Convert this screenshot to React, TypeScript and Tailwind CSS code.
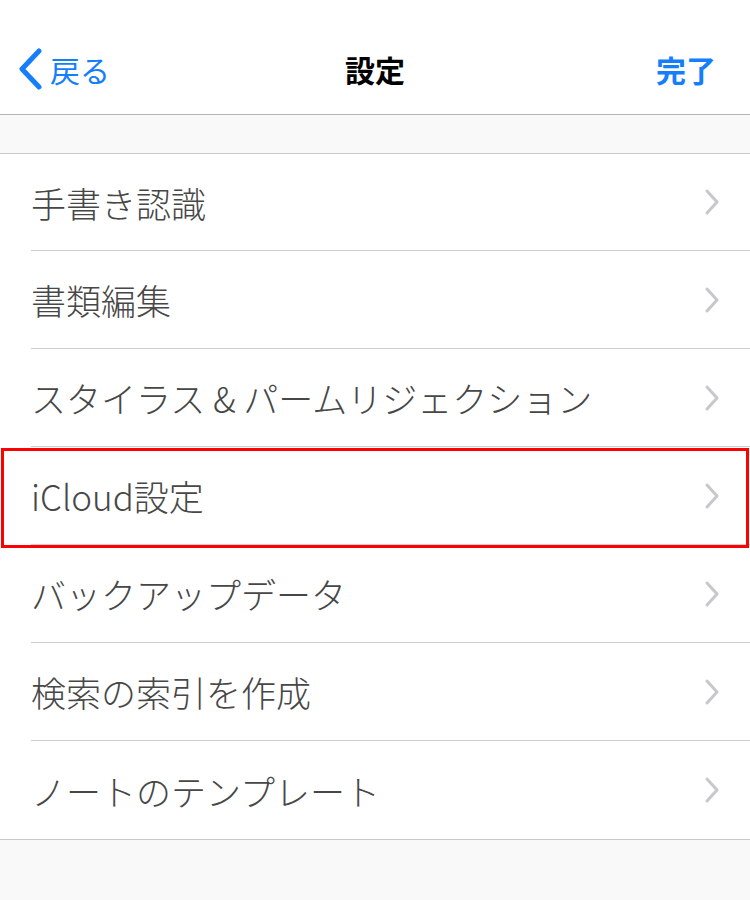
const items = [
  "手書き認識",
  "書類編集",
  "スタイラス & パームリジェクション",
  "iCloud設定",
  "バックアップデータ",
  "検索の索引を作成",
  "ノートのテンプレート",
];

function Chevron() {
  return (
    <svg width="16" height="28" viewBox="0 0 16 28" className="shrink-0">
      <path d="M3 3 L13 14 L3 25" fill="none" stroke="#c7c7cc" strokeWidth="3" strokeLinecap="round" strokeLinejoin="round" />
    </svg>
  );
}

export default function App() {
  return (
    <div
      className="relative h-[900px] w-[750px] overflow-hidden bg-[#f9f9f9]"
      style={{ fontFamily: '"Noto Sans CJK JP", "Noto Sans", sans-serif' }}
    >
      <header className="relative flex h-[115px] items-center border-b border-[#b5b5b5] bg-white pt-[24px]">
        <div className="flex items-center pl-[16px] text-[#157efb]">
          <svg width="28" height="42" viewBox="0 0 28 42">
            <path d="M23 3 L6 21 L23 39" fill="none" stroke="#157efb" strokeWidth="5" strokeLinecap="round" strokeLinejoin="round" />
          </svg>
          <span className="ml-[6px] text-[30px] leading-none">戻る</span>
        </div>
        <div className="absolute left-1/2 -translate-x-1/2 text-[30px] font-bold leading-none text-black">設定</div>
        <div className="ml-auto pr-[34px] text-[30px] font-bold leading-none text-[#157efb]">完了</div>
      </header>
      <div className="h-[39px] border-b border-[#c8c8c8] bg-[#f9f9f9]" />
      <ul className="bg-white">
        {items.map((label, i) => (
          <li key={label} className="pl-[31px]">
            <div
              className={
                "flex items-center pr-[30px] " +
                (i === 0 ? "h-[97px] " : "h-[98px] ") +
                (i < items.length - 1 ? "border-b border-[#cfcfcf]" : "")
              }
            >
              <span className="flex-1 whitespace-pre text-[35px] font-light leading-none text-[#474747]">{label}</span>
              <Chevron />
            </div>
          </li>
        ))}
      </ul>
      <div className="border-t border-[#c8c8c8]" />
      <div className="pointer-events-none absolute left-[1px] top-[448px] h-[100px] w-[748px] border-[3px] border-[#ff0000]" />
    </div>
  );
}
